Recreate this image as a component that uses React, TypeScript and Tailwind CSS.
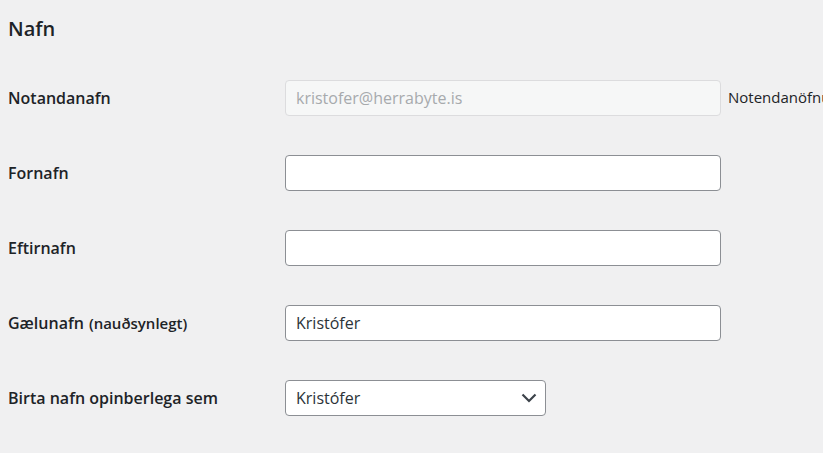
import React from 'react';

// Rows of the "Nafn" section of the profile form
const fields = [
  { label: 'Fornafn', value: '' },
  { label: 'Eftirnafn', value: '' },
  { label: 'Gælunafn', note: '(nauðsynlegt)', value: 'Kristófer' },
];

function Chevron() {
  return (
    <svg width="16" height="16" viewBox="0 0 16 16" className="text-[#3c434a]">
      <path d="M1.5 4.5L8 11l6.5-6.5" fill="none" stroke="currentColor" strokeWidth="2.2" />
    </svg>
  );
}

export default function App() {
  return (
    <div
      className="h-[453px] w-[823px] overflow-hidden bg-[#f0f0f1] pl-2 text-[#1d2327]"
      style={{ fontFamily: '"Open Sans", "Noto Sans", sans-serif' }}
    >
      <h2 className="flex h-[60px] items-center pb-[2px] text-[20px] font-semibold">Nafn</h2>

      {/* Notandanafn - disabled */}
      <div className="flex h-[75px] items-center">
        <div className="w-[277px] shrink-0 text-[16px] font-semibold">Notandanafn</div>
        <input
          disabled
          value="kristofer@herrabyte.is"
          readOnly
          className="h-9 w-[436px] shrink-0 rounded-[4px] border border-[#dcdcde] bg-[#f6f7f7] px-[10px] text-[16px] text-[#a7aaad]"
        />
        <span className="ml-[7px] shrink-0 whitespace-nowrap text-[15px]">Notendanöfnum er ekki hægt að breyta.</span>
      </div>

      {fields.map((f) => (
        <div key={f.label} className="flex h-[75px] items-center">
          <div className="w-[277px] shrink-0 text-[16px] font-semibold">
            {f.label}
            {f.note && <span className="ml-[5px] text-[15px]">{f.note}</span>}
          </div>
          <input
            defaultValue={f.value}
            className="h-9 w-[436px] shrink-0 rounded-[4px] border border-[#8c8f94] bg-white px-[10px] text-[16px] text-[#2c3338] outline-none"
          />
        </div>
      ))}

      <div className="flex h-[75px] items-center">
        <div className="w-[277px] shrink-0 text-[16px] font-semibold">Birta nafn opinberlega sem</div>
        <div className="flex h-9 w-[261px] shrink-0 items-center justify-between rounded-[4px] border border-[#8c8f94] bg-white pl-[10px] pr-[8px] text-[16px] text-[#2c3338]">
          <span>Kristófer</span>
          <Chevron />
        </div>
      </div>
    </div>
  );
}
